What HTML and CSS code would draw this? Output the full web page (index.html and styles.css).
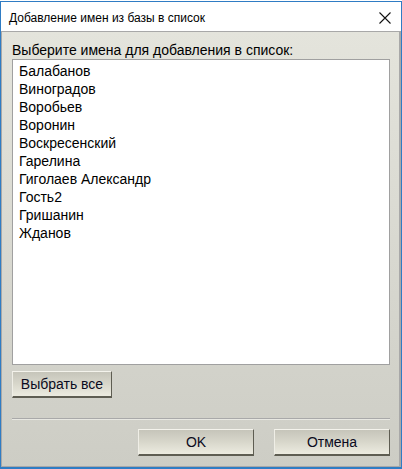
FILE: index.html
```html
<!DOCTYPE html>
<html>
    <head>
        <meta charset="utf-8" />
        <title>Добавление имен из базы в список</title>
        <link rel="stylesheet" href="styles.css">
    </head>
    <body>
        <div class="window">
            <div class="titlebar">
                <span class="title">Добавление имен из базы в список</span>
                <svg class="close" width="12" height="12" viewBox="0 0 12 12">
                    <path d="M0.5 0.5 L11.5 11.5 M11.5 0.5 L0.5 11.5" stroke="#111" stroke-width="1.1" fill="none"/>
                </svg>
            </div>
            <div class="client">
                <div class="caption">Выберите имена для добавления в список:</div>
                <div class="list">
                    <div class="item">Балабанов</div>
                    <div class="item">Виноградов</div>
                    <div class="item">Воробьев</div>
                    <div class="item">Воронин</div>
                    <div class="item">Воскресенский</div>
                    <div class="item">Гарелина</div>
                    <div class="item">Гиголаев Александр</div>
                    <div class="item">Гость2</div>
                    <div class="item">Гришанин</div>
                    <div class="item">Жданов</div>
                </div>
                <div class="btn select-all">Выбрать все</div>
                <div class="separator"></div>
                <div class="actions">
                    <div class="btn wide">OK</div>
                    <div class="btn wide">Отмена</div>
                </div>
            </div>
        </div>
    </body>
</html>
```

FILE: styles.css
```css
html {
    margin: 0px;
    padding: 0px;
}
body {
    margin: 0px;
    padding: 0px;
    background-color: #ffffff;
    font-family: 'Liberation Sans', Arial, sans-serif;
    color: #000;
}
.window {
    margin-top: 1px;
    width: 402px;
    height: 468px;
    box-sizing: border-box;
    border: 1px solid #2f7cc4;
    border-bottom-width: 2px;
    display: flex;
    flex-direction: column;
}
.titlebar {
    height: 29px;
    background-color: #ffffff;
    display: flex;
    align-items: center;
    padding-left: 8px;
    padding-right: 10px;
    flex-shrink: 0;
}
.title {
    font-size: 12px;
    color: #000;
    flex: 1;
    padding-top: 2px;
}
.close {
    display: block;
    margin-top: 2px;
}
.client {
    flex: 1;
    border-top: 1px solid #a8a8a8;
    border-left: 1px solid #a8a8a8;
    border-right: 2px solid #a8a8a8;
    border-bottom: 1px solid #a8a8a8;
    background: linear-gradient(to bottom, #e4e4dc, #cdcdc5);
    padding: 10px 9px 0px 10px;
    display: flex;
    flex-direction: column;
}
.caption {
    font-size: 14px;
    line-height: 17px;
}
.list {
    height: 300px;
    background-color: #ffffff;
    border: 1px solid #a0a0a0;
    padding: 2px 6px;
    font-size: 14px;
}
.item {
    line-height: 18px;
    white-space: nowrap;
}
.btn {
    box-sizing: border-box;
    height: 27px;
    font-size: 14px;
    display: flex;
    align-items: center;
    justify-content: center;
    color: #0a0a20;
    background: linear-gradient(to bottom, #c6c5ba, #d8d7cb 50%, #ecebe0);
    border-top: 1px solid #f4f3ec;
    border-left: 1px solid #efeee6;
    border-right: 1px solid #5e5d52;
    border-bottom: 2px solid #5e5d52;
}
.select-all {
    width: 100px;
    margin-top: 6px;
}
.separator {
    margin-top: 20px;
    height: 1px;
    background-color: #a9a9a9;
    border-bottom: 1px solid #e8e8e2;
}
.actions {
    display: flex;
    justify-content: flex-end;
    gap: 20px;
    margin-top: 9px;
}
.wide {
    width: 116px;
}
```
